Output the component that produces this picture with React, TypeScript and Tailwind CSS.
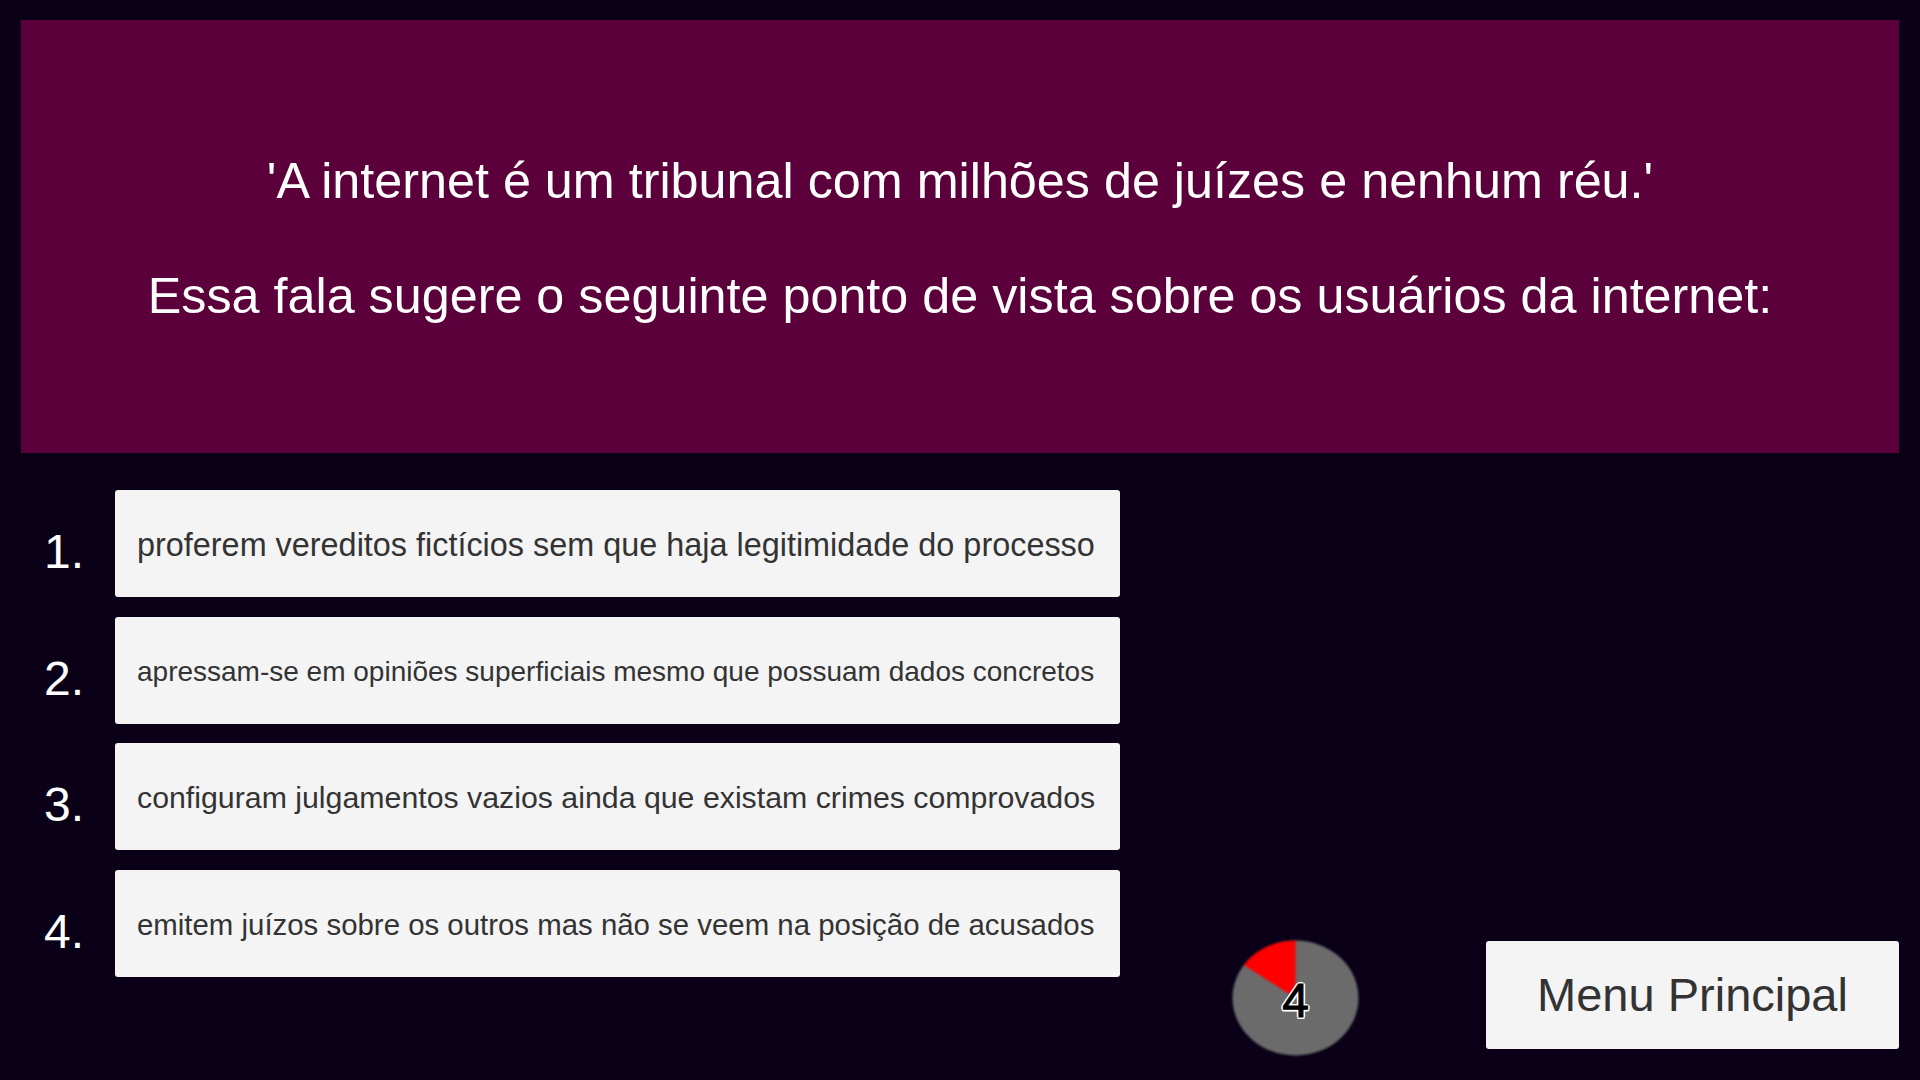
const options = [
  { text: "proferem vereditos fictícios sem que haja legitimidade do processo", size: "text-[32.4px]" },
  { text: "apressam-se em opiniões superficiais mesmo que possuam dados concretos", size: "text-[28px]" },
  { text: "configuram julgamentos vazios ainda que existam crimes comprovados", size: "text-[30.3px]" },
  { text: "emitem juízos sobre os outros mas não se veem na posição de acusados", size: "text-[29.4px]" },
];

function Timer({ value }: { value: number }) {
  return (
    <div className="relative h-[116px] w-[127px]">
      <svg viewBox="0 0 127 116" className="h-full w-full blur-[0.8px]">
        <ellipse cx="63.5" cy="58" rx="63" ry="57.5" fill="#6b6b6b" />
        <path d="M63.5 58 L63.5 0.5 A63 57.5 0 0 0 11.9 25 Z" fill="#ff0000" />
      </svg>
      <span className="absolute inset-0 flex items-center justify-center pt-[5px] text-[48px] leading-none text-black [-webkit-text-stroke:1px_#000] [text-shadow:2px_0_#fff,-2px_0_#fff,0_2px_#fff,0_-2px_#fff,1.5px_1.5px_#fff,-1.5px_-1.5px_#fff,1.5px_-1.5px_#fff,-1.5px_1.5px_#fff]">
        {value}
      </span>
    </div>
  );
}

export default function App() {
  return (
    <div className="flex h-[1080px] w-[1920px] flex-col overflow-hidden bg-[#0a0119] px-[21px] pt-[20px] font-['Liberation_Sans',Arial,sans-serif]">
      <header className="flex h-[433px] w-full flex-col items-center justify-center bg-[#5c003b] pt-[3px] text-[50.3px] leading-[115px] text-white">
        <p>'A internet é um tribunal com milhões de juízes e nenhum réu.'</p>
        <p>Essa fala sugere o seguinte ponto de vista sobre os usuários da internet:</p>
      </header>

      <div className="flex flex-1">
        <ol className="ml-[23px] mt-[37px] flex flex-col gap-[19.5px]">
          {options.map((o, i) => (
            <li key={i} className="flex items-center">
              <span className="w-[71px] pt-[17px] text-[48px] leading-none text-white">{i + 1}.</span>
              <button className="flex h-[107px] w-[1005px] items-center rounded-[3px] bg-[#f4f4f4] pl-[22px] pt-[3px] text-left text-[#333333]">
                <span className={`${o.size} leading-none whitespace-nowrap`}>{o.text}</span>
              </button>
            </li>
          ))}
        </ol>

        <div className="ml-auto mt-[487px] flex items-start self-start">
          <Timer value={4} />
          <button className="ml-[127px] mt-[1px] flex h-[108px] w-[413px] items-center justify-center rounded-[3px] bg-[#f4f4f4] pt-[1px] text-[47px] text-[#333333]">
            Menu Principal
          </button>
        </div>
      </div>
    </div>
  );
}
